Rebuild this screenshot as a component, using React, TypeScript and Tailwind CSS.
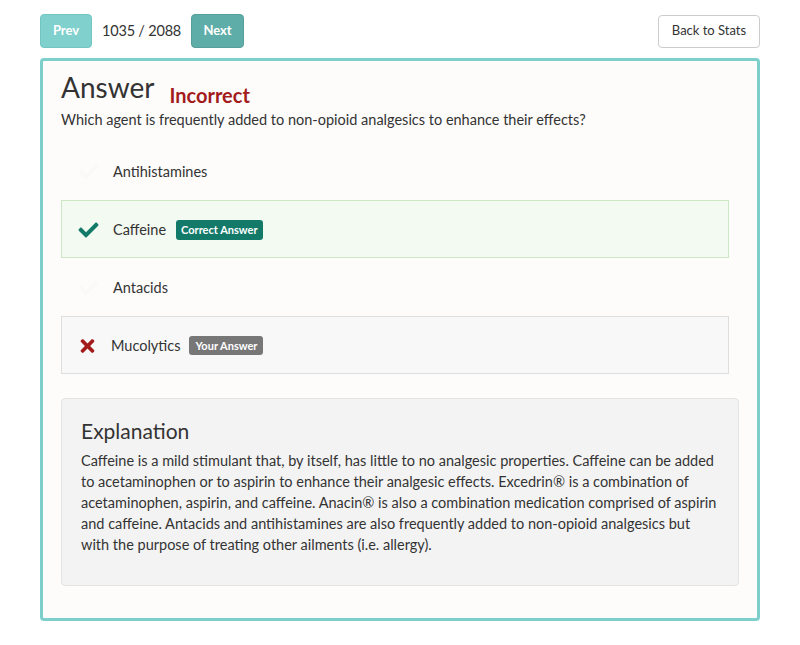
import React from 'react';

const CheckIcon = ({ className }: { className?: string }) => (
  <svg viewBox="0 0 512 512" className={className} fill="currentColor">
    <path d="M173.898 439.404l-166.4-166.4c-9.997-9.997-9.997-26.206 0-36.204l36.203-36.204c9.997-9.998 26.207-9.998 36.204 0L192 312.69 432.095 72.596c9.997-9.997 26.207-9.997 36.204 0l36.203 36.204c9.997 9.997 9.997 26.206 0 36.204l-294.4 294.401c-9.998 9.997-26.207 9.997-36.204-.001z" />
  </svg>
);

const TimesIcon = ({ className }: { className?: string }) => (
  <svg viewBox="0 0 352 512" className={className} fill="currentColor">
    <path d="M242.72 256l100.07-100.07c12.28-12.28 12.28-32.19 0-44.48l-22.24-22.24c-12.28-12.28-32.19-12.28-44.48 0L176 189.28 75.93 89.21c-12.28-12.28-32.19-12.28-44.48 0L9.21 111.45c-12.28 12.28-12.28 32.19 0 44.48L109.28 256 9.21 356.07c-12.28 12.28-12.28 32.19 0 44.48l22.24 22.24c12.28 12.28 32.2 12.28 44.48 0L176 322.72l100.07 100.07c12.28 12.28 32.2 12.28 44.48 0l22.24-22.24c12.28-12.28 12.28-32.19 0-44.48L242.72 256z" />
  </svg>
);

type Choice = {
  text: string;
  state: 'none' | 'correct' | 'wrong';
};

const choices: Choice[] = [
  { text: 'Antihistamines', state: 'none' },
  { text: 'Caffeine', state: 'correct' },
  { text: 'Antacids', state: 'none' },
  { text: 'Mucolytics', state: 'wrong' },
];

// wrapped the same way as the original page
const explanationLines = [
  'Caffeine is a mild stimulant that, by itself, has little to no analgesic properties. Caffeine can be added',
  'to acetaminophen or to aspirin to enhance their analgesic effects. Excedrin® is a combination of',
  'acetaminophen, aspirin, and caffeine. Anacin® is also a combination medication comprised of aspirin',
  'and caffeine. Antacids and antihistamines are also frequently added to non-opioid analgesics but',
  'with the purpose of treating other ailments (i.e. allergy).',
];

function ChoiceRow({ choice }: { choice: Choice }) {
  const box =
    choice.state === 'correct'
      ? 'border border-[#cbe7c4] bg-[#f3faf1]'
      : choice.state === 'wrong'
        ? 'border border-[#dedede] bg-[#f8f8f9]'
        : 'border border-transparent';
  return (
    <div className={`flex h-[58px] w-[668px] items-center pl-4 pt-[1px] ${box}`}>
      <div className={`flex items-center ${choice.state === 'wrong' ? 'w-[33px]' : 'w-[35px]'}`}>
        {choice.state === 'wrong' ? (
          <TimesIcon className="ml-[1px] h-[20px] w-[17px] text-[#a31b1b]" />
        ) : (
          <CheckIcon
            className={`h-[20px] w-[21px] ${choice.state === 'correct' ? 'text-[#137a6a]' : 'text-[#faf9f8]'}`}
          />
        )}
      </div>
      <span className="text-[14.5px] text-[#333]">{choice.text}</span>
      {choice.state === 'correct' && (
        <span className="ml-[10px] rounded-[3px] bg-[#137a6a] px-[5px] py-[2px] text-[11px] font-bold leading-[16px] text-white">
          Correct Answer
        </span>
      )}
      {choice.state === 'wrong' && (
        <span className="ml-[9px] rounded-[3px] bg-[#777] px-[6px] py-[2px] text-[11px] font-bold leading-[15px] text-white">
          Your Answer
        </span>
      )}
    </div>
  );
}

export default function App() {
  return (
    <div className="min-h-[645px] bg-white px-[40px] pt-[14px] font-['Lato','Liberation_Sans',sans-serif] text-[#333]">
      <div className="flex items-center">
        <button className="h-[34px] w-[52px] rounded-[4px] border border-[#72c6c2] bg-[#80d0cd] text-[13px] font-bold text-white">
          Prev
        </button>
        <span className="mx-[10px] text-[14.5px] tracking-[-0.2px] text-[#333]">1035 / 2088</span>
        <button className="h-[34px] w-[53px] rounded-[4px] border border-[#579f9a] bg-[#5fada8] text-[13px] font-bold text-white">
          Next
        </button>
        <button className="ml-auto h-[33px] w-[102px] rounded-[4px] border border-[#ccc] bg-white text-[13px] text-[#333]">
          Back to Stats
        </button>
      </div>

      <div className="mt-[10px] h-[563px] w-[720px] rounded-[4px] border-[3px] border-[#7dcfcb] bg-[#fdfcfb] px-[18px] pt-[6px]">
        <div className="flex items-end">
          <h1 className="text-[28px] leading-[40px] text-[#333]">Answer</h1>
          <span className="ml-[15px] text-[20px] font-bold leading-[24px] text-[#a31b1b]">Incorrect</span>
        </div>
        <p className="mt-[3px] text-[14.5px] leading-[20px] text-[#333]">
          Which agent is frequently added to non-opioid analgesics to enhance their effects?
        </p>

        <div className="mt-[12px] flex flex-col">
          {choices.map((c) => (
            <ChoiceRow key={c.text} choice={c} />
          ))}
        </div>

        <div className="mt-[24px] h-[188px] w-[678px] rounded-[4px] border border-[#e3e3e3] bg-[#f3f3f3] px-[19px] pt-[17px]">
          <h2 className="text-[21px] leading-[30px] text-[#333]">Explanation</h2>
          <div className="mt-[4px] flex flex-col text-[14.5px] leading-[21px] text-[#333]">
            {explanationLines.map((line) => (
              <div key={line} className="whitespace-nowrap">
                {line}
              </div>
            ))}
          </div>
        </div>
      </div>
    </div>
  );
}
